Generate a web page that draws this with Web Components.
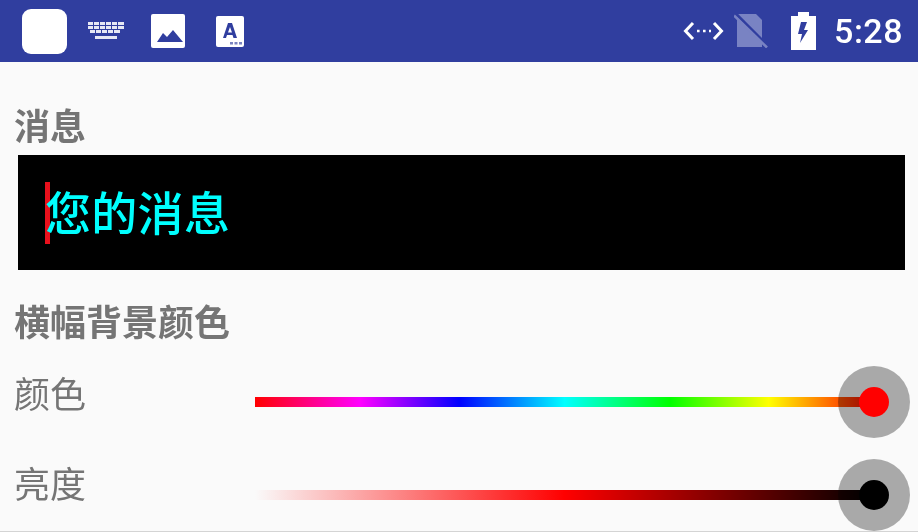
<!DOCTYPE html>
<html lang="zh">
<head>
<meta charset="utf-8">
<title>消息</title>
<style>
   html, body { margin: 0; height: 100%; overflow: hidden; }
   body { background: #fafafa; font-family: "Noto Sans CJK SC", "Noto Sans", sans-serif; color: #757575; }
   .content { display: flex; flex-direction: column; height: 470px; box-sizing: border-box; border-bottom: 1px solid #d4d4d4; }
</style>
</head>
<body>
<status-bar></status-bar>
<div class="content">
   <section-title style="--top: 41px">消息</section-title>
   <message-box>您的消息</message-box>
   <section-title style="--top: 29px">横幅背景颜色</section-title>
   <slider-row style="--row-top: 24px" track="linear-gradient(to right, #f00, #f0f 17%, #00f 33%, #0ff 50%, #0f0 67%, #ff0 83%, #f00)" thumb="#f00" lift="20px">颜色</slider-row>
   <slider-row style="--row-top: 21px" track="linear-gradient(to right, #fafafa, #f00 50%, #000)" thumb="#000" lift="26px">亮度</slider-row>
</div>

<script>
class StatusBar extends HTMLElement {
   constructor() {
      super()
      this.attachShadow({ mode: 'open' }).innerHTML = `
      <style>
         :host { display: flex; align-items: center; height: 62px; box-sizing: border-box; padding: 0 15px 0 22px; background: #303e9f; color: #fff; }
         .app { width: 45px; height: 45px; border-radius: 9px; background: #fff; margin-right: 20px; }
         .group { display: flex; align-items: center; }
         svg { display: block; filter: blur(.5px); }
         .spacer { flex: 1; }
         .time { font: 500 34px/1 Roboto, sans-serif; letter-spacing: .5px; margin-left: 18px; filter: blur(.4px); }
      </style>
      <div class="app"></div>
      <div class="group">
         <svg width="38" height="22" viewBox="0 0 38 22" style="margin-right:26px">
            <path fill="#e6e8f4" d="M1 2h5v3H1zM7 2h5v3H7zM13 2h5v3h-5zM19 2h5v3h-5zM25 2h5v3h-5zM31 2h6v3h-6zM1 6h5v3H1zM7 6h5v3H7zM13 6h5v3h-5zM19 6h5v3h-5zM25 6h5v3h-5zM31 6h6v3h-6zM3 10h5v3H3zM9 10h5v3H9zM15 10h5v3h-5zM21 10h5v3h-5zM27 10h6v3h-6zM8 16h22v3H8z"/>
         </svg>
         <svg width="34" height="34" viewBox="0 0 34 34" style="margin-right:31px">
            <rect width="34" height="34" rx="2" fill="#fff"/>
            <path fill="#303e9f" d="M6 28l6-9 4 4 6-7 10 12z"/>
         </svg>
         <svg width="28" height="31" viewBox="0 0 28 31">
            <rect width="28" height="31" rx="2" fill="#fff"/>
            <path fill="#303e9f" fill-rule="evenodd" d="M12 7h4l5 15h-3.500l-1-3h-5.500l-1 3H7zM14 11l-2 5.500h4z"/>
            <path fill="#7a84c0" d="M14 26h3v2.500h-3zM18.500 26h3v2.500h-3zM23 26h3v2.500h-3z"/>
         </svg>
      </div>
      <div class="spacer"></div>
      <div class="group">
         <svg width="41" height="22" viewBox="0 0 41 22" fill="none" stroke="#fff" stroke-width="3" style="margin-right:10px">
            <path d="M10 3L2.500 11 10 19M31 3l7.500 8L31 19"/>
            <path stroke-width="2.600" stroke-dasharray="2.600 3.400" d="M14 11h14"/>
         </svg>
         <svg width="34" height="34" viewBox="0 0 34 34" style="margin-right:23px">
            <path fill="#7983c3" d="M3 2q0-2 2-2h17l6 6v27H3z"/>
            <path stroke="#303e9f" stroke-width="3" d="M2 0l31 31"/>
            <path stroke="#7983c3" stroke-width="2.500" d="M0 1.500l33 32"/>
         </svg>
         <svg width="25" height="38" viewBox="0 0 25 38">
            <path fill="#fff" d="M7 0h11v4h7v34H0V4h7z"/>
            <path fill="#303e9f" d="M16 10h-6l-3 12h4l-2 9 8-13h-4l3-8z"/>
         </svg>
         <span class="time">5:28</span>
      </div>`
   }
}

class SectionTitle extends HTMLElement {
   constructor() {
      super()
      this.attachShadow({ mode: 'open' }).innerHTML = `
      <style>
         :host { display: block; flex: none; margin-top: var(--top, 0); padding-left: 14px; font-size: 36px; line-height: 43px; height: 43px; font-weight: 700; color: #757575; }
         span { display: block; filter: blur(.5px); }
      </style>
      <span><slot></slot></span>`
   }
}

class MessageBox extends HTMLElement {
   constructor() {
      super()
      this.attachShadow({ mode: 'open' }).innerHTML = `
      <style>
         :host { display: flex; flex: none; align-items: center; height: 115px; margin: 9px 13px 0 18px; padding-left: 27px; background: #000; color: #00ffff; font-size: 46px; font-weight: 500; }
         .caret { width: 5px; height: 62px; background: #e8101c; margin-right: -5px; flex: none; }
         span { line-height: 62px; margin-top: -6px; letter-spacing: .3px; filter: blur(.4px); }
      </style>
      <div class="caret"></div>
      <span><slot></slot></span>`
   }
}

class SliderRow extends HTMLElement {
   constructor() {
      super()
      this.attachShadow({ mode: 'open' }).innerHTML = `
      <style>
         :host { display: flex; flex: none; align-items: center; height: 72px; margin-top: var(--row-top, 0); padding-left: 14px; font-size: 36px; color: #757575; }
         .label { width: 241px; flex: none; line-height: 43px; filter: blur(.5px); }
         .track { position: relative; width: 619px; height: 10px; flex: none; filter: blur(.3px); }
         .halo { position: absolute; right: -36px; top: -31px; width: 72px; height: 72px; border-radius: 50%; background: rgba(0, 0, 0, .32); }
         .thumb { position: absolute; right: -15px; top: -10px; width: 30px; height: 30px; border-radius: 50%; }
      </style>
      <div class="label"><slot></slot></div>
      <div class="track"><div class="halo"></div><div class="thumb"></div></div>`
      this.shadowRoot.querySelector('.track').style.background = this.getAttribute('track')
      this.shadowRoot.querySelector('.thumb').style.background = this.getAttribute('thumb')
      this.shadowRoot.querySelector('.label').style.marginTop = '-' + this.getAttribute('lift')
   }
}

customElements.define('status-bar', StatusBar)
customElements.define('section-title', SectionTitle)
customElements.define('message-box', MessageBox)
customElements.define('slider-row', SliderRow)
</script>
</body>
</html>
